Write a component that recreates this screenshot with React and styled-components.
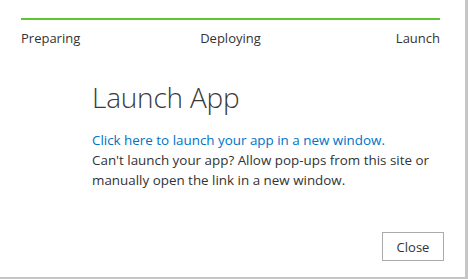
import React from "react";
import styled, { createGlobalStyle } from "styled-components";

const Global = createGlobalStyle`
  html, body { margin: 0; padding: 0; }
  body {
    background: #c6c6c6;
    font-family: "Open Sans", "Noto Sans", sans-serif;
    width: 468px;
    height: 279px;
    overflow: hidden;
  }
`;

const Dialog = styled.div`
  width: 465px;
  height: 277px;
  background: #fff;
  box-sizing: border-box;
  padding: 18px 25px 0 21px;
  display: flex;
  flex-direction: column;
`;

const Progress = styled.div`
  height: 2px;
  background: #5ec42f;
`;

const Steps = styled.div`
  display: grid;
  grid-template-columns: 1fr auto 1fr;
  margin-top: 9px;
  font-size: 13px;
  line-height: 18px;
  color: #333;
`;

const Step = styled.span`
  text-align: ${(p) => p.$align};
`;

const Content = styled.div`
  padding-left: 71px;
  margin-top: 32px;
`;

const Title = styled.h1`
  margin: 0;
  font-weight: 300;
  font-size: 28px;
  line-height: 36px;
  color: #3a3a3a;
  letter-spacing: -0.2px;
`;

const Body = styled.div`
  margin-top: 15px;
  font-size: 13.4px;
  line-height: 20px;
  color: #333;
`;

const Link = styled.a`
  color: #0072c6;
  text-decoration: none;
`;

const Footer = styled.div`
  display: flex;
  justify-content: flex-end;
  margin-top: auto;
  margin-bottom: 16px;
  margin-right: -4px;
`;

const Button = styled.button`
  width: 62px;
  height: 29px;
  background: #fff;
  border: 1px solid #ababab;
  font-family: inherit;
  font-size: 13px;
  color: #333;
  padding: 0;
`;

export default function App() {
  return (
    <>
      <Global />
      <Dialog>
        <Progress />
        <Steps>
          <Step $align="left">Preparing</Step>
          <Step $align="center">Deploying</Step>
          <Step $align="right">Launch</Step>
        </Steps>
        <Content>
          <Title>Launch App</Title>
          <Body>
            <Link href="#">Click here to launch your app in a new window.</Link>
            <br />
            Can't launch your app? Allow pop-ups from this site or
            <br />
            manually open the link in a new window.
          </Body>
        </Content>
        <Footer>
          <Button>Close</Button>
        </Footer>
      </Dialog>
    </>
  );
}
